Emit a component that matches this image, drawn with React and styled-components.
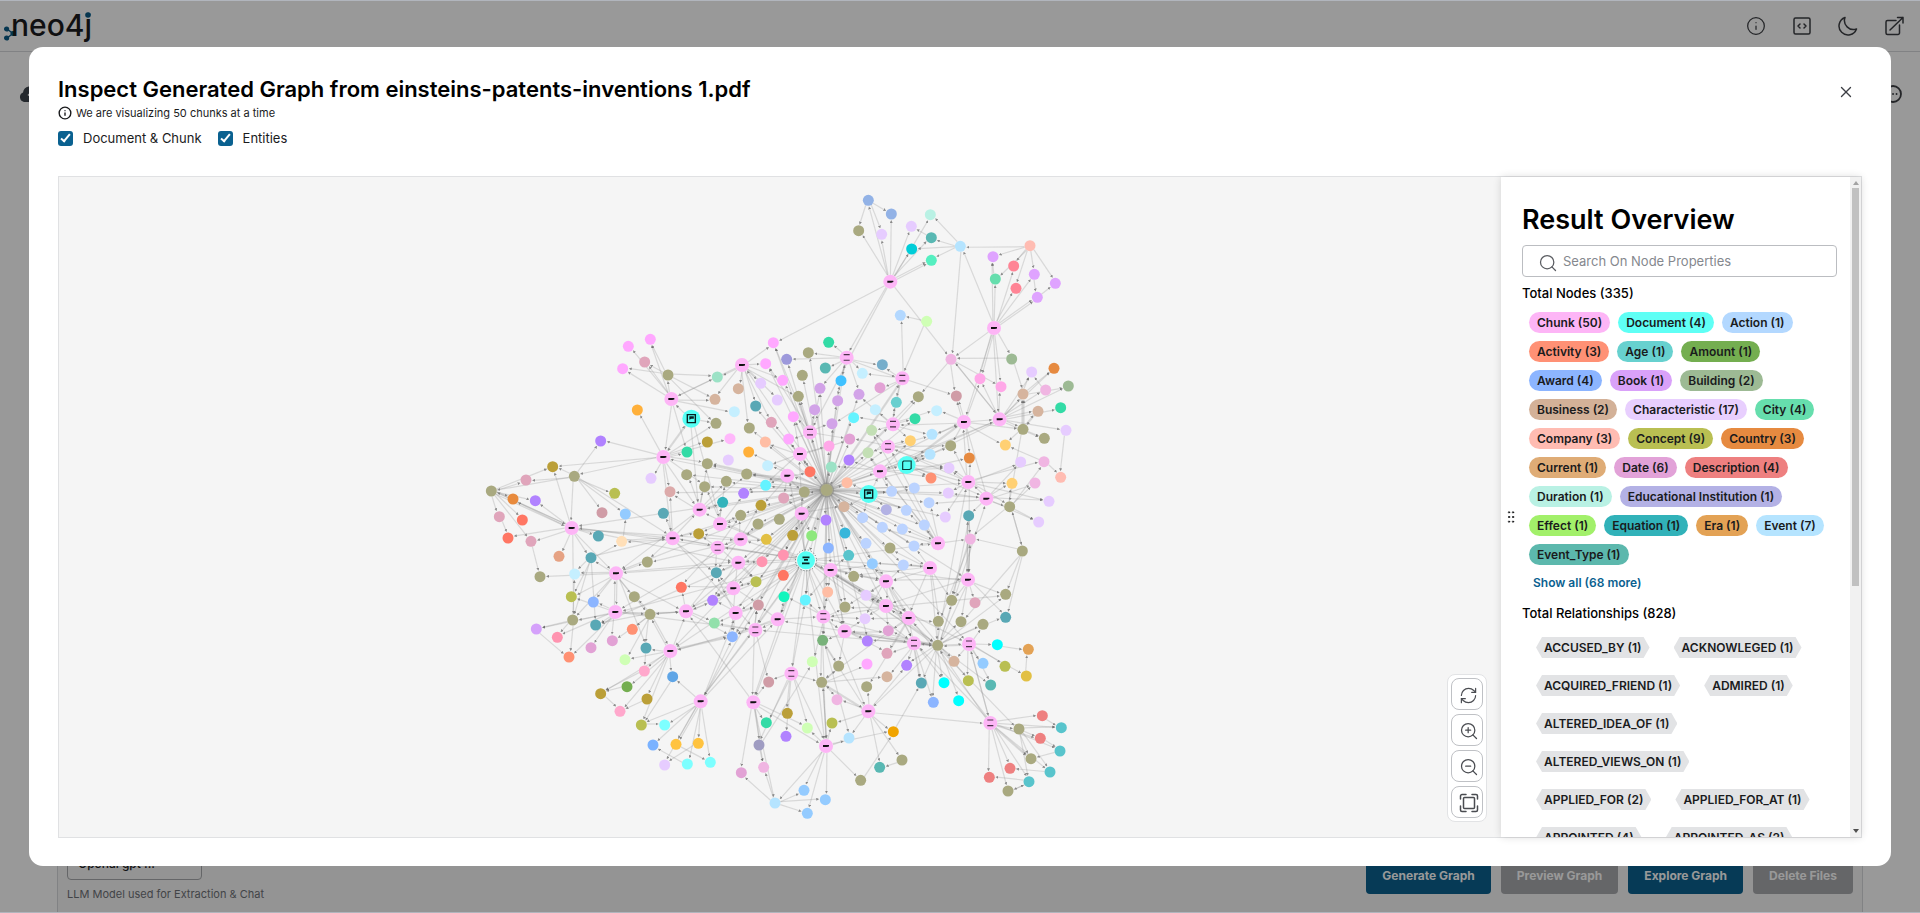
import React from 'react';
import styled, { createGlobalStyle } from 'styled-components';
import { Info, X, Search, ZoomIn, ZoomOut, RefreshCw, GripVertical } from 'lucide-react';

const GlobalStyle = createGlobalStyle`
  *, *::before, *::after { box-sizing: border-box; }
  body {
    margin: 0;
    background: #ffffff;
    color: #1a1b1d;
    font-family: Inter, "Liberation Sans", sans-serif;
    font-size: 12px;
    line-height: 20px;
  }
  button, input, select { font: inherit; color: inherit; }
  h1, h2, h3, p, ul { margin: 0; padding: 0; }
  ul { list-style: none; }
`;

/* ---------- page behind the dialog ---------- */

const Page = styled.div`
  height: 100vh;
  display: flex;
  flex-direction: column;
  overflow: hidden;
`;

const Header = styled.header`
  flex: 0 0 52px;
  display: flex;
  align-items: center;
  justify-content: space-between;
  padding: 0 14px 0 4px;
  border-bottom: 1px solid #d8d9dc;
`;

const HeaderActions = styled.div`
  display: flex;
  align-items: center;
  gap: 22px;
`;

const GhostButton = styled.button`
  display: grid;
  place-items: center;
  width: 24px;
  height: 24px;
  padding: 0;
  border: 0;
  background: none;
  color: #3d3f44;
`;

const Main = styled.main`
  flex: 1;
  display: flex;
`;

const Gutter = styled.aside`
  flex: 0 0 57px;
  display: flex;
  flex-direction: column;
  align-items: ${(p) => (p.$side === 'right' ? 'flex-start' : 'flex-end')};
  padding: ${(p) => (p.$side === 'right' ? '30px 0 0 18px' : '30px 14px 0 0')};
`;

const Content = styled.section`
  flex: 1;
  display: flex;
  align-items: flex-end;
  justify-content: space-between;
  padding: 0 9px;
  background: #f7f7f7;
  border: solid #d8d9dc;
  border-width: 0 1px;
`;

const ModelField = styled.label`
  display: flex;
  flex-direction: column;
  gap: 4px;
  padding-bottom: 9px;
  color: #6f7277;
  font-size: 11px;
`;

const ModelSelect = styled.select`
  appearance: none;
  width: 135px;
  height: 36px;
  padding: 4px 10px 0;
  border: 1px solid #a8aaad;
  border-radius: 4px;
  background: #f7f7f7;
  color: #1a1b1d;
  font-size: 12px;
  font-weight: 500;
`;

const FooterActions = styled.div`
  display: flex;
  gap: 10px;
  padding-bottom: 19px;
`;

const FooterButton = styled.button`
  height: 36px;
  padding: 0 16px;
  border: 0;
  border-radius: 4px;
  background: ${(p) => (p.disabled ? '#a8aaad' : '#0a6190')};
  color: #ffffff;
  font-weight: 700;
`;

/* ---------- dialog ---------- */

const Overlay = styled.div`
  position: fixed;
  inset: 0;
  display: flex;
  padding: 46px 29px;
  border: solid #b1b5bd;
  border-width: 1px 0;
  background: rgba(0, 0, 0, 0.4);
`;

const Dialog = styled.section`
  flex: 1;
  min-width: 0;
  display: flex;
  flex-direction: column;
  padding: 26px 29px 28px;
  border-radius: 14px;
  background: #ffffff;
`;

const DialogHead = styled.header`
  display: flex;
  align-items: flex-start;
  justify-content: space-between;
  padding-right: 4px;
`;

const CloseButton = styled(GhostButton)`
  height: 38px;
`;

const DialogTitle = styled.h2`
  font-size: 22px;
  line-height: 32px;
  font-weight: 600;
  color: #000000;
`;

const Note = styled.p`
  display: flex;
  align-items: center;
  gap: 4px;
  font-size: 11px;
  line-height: 16px;
`;

const Filters = styled.div`
  display: flex;
  gap: 16px;
  margin-top: 7px;
  font-size: 13px;
`;

const FilterLabel = styled.label`
  display: flex;
  align-items: center;
  gap: 10px;
`;

const Tick = styled.input`
  appearance: none;
  position: relative;
  width: 15px;
  height: 15px;
  margin: 0;
  border-radius: 3px;
  background: #0a6190;

  &:checked::after {
    content: "";
    position: absolute;
    left: 5px;
    top: 1px;
    width: 5px;
    height: 10px;
    border: solid #ffffff;
    border-width: 0 2px 2px 0;
    transform: rotate(40deg);
  }
`;

const Viewer = styled.div`
  flex: 1;
  min-height: 0;
  display: flex;
  margin-top: 28px;
  border: 1px solid #e0e1e3;
`;

const Canvas = styled.div`
  position: relative;
  flex: 1;
  min-width: 0;
  background: #f5f5f5;

  > svg { display: block; width: 100%; height: 100%; }
`;

const ViewControls = styled.div`
  position: absolute;
  right: 14px;
  bottom: 15px;
  display: flex;
  flex-direction: column;
  gap: 4px;
  padding: 3px;
  border: 1px solid #e2e3e5;
  border-radius: 8px;
  background: #ffffff;
`;

const ViewButton = styled.button`
  display: grid;
  place-items: center;
  width: 32px;
  height: 32px;
  padding: 2px 0 0 3px;
  border: 1px solid #bfc1c5;
  border-radius: 8px;
  background: #ffffff;
  color: #4a4c51;
`;

const Side = styled.aside`
  position: relative;
  flex: 0 0 360px;
  display: flex;
  background: #ffffff;
  box-shadow: 0 0 8px rgba(0, 0, 0, 0.14);
`;

const SideBody = styled.div`
  flex: 1;
  min-width: 0;
  padding: 23px 13px 0 21px;
  overflow: hidden;
`;

const Grip = styled.span`
  position: absolute;
  left: 2px;
  top: 50%;
  display: flex;
  padding-top: 2px;
  color: #1a1b1d;
`;

const SideTitle = styled.h1`
  font-size: 27px;
  line-height: 40px;
  font-weight: 600;
  color: #000000;
`;

const SearchBox = styled.label`
  display: flex;
  align-items: center;
  gap: 5px;
  height: 32px;
  margin: 5px 0 6px;
  padding: 0 8px 0 15px;
  border: 1px solid #bbbdc1;
  border-radius: 4px;
  color: #5a5c61;

  svg { margin-top: 4px; }

  input {
    flex: 1;
    min-width: 0;
    padding: 0;
    border: 0;
    outline: 0;
    background: none;
    font-size: 13px;
  }
  input::placeholder { color: #85888e; opacity: 1; }
`;

const SubTitle = styled.h3`
  font-size: 13px;
  line-height: 20px;
  font-weight: 500;
  color: #000000;
`;

const NodeList = styled.ul`
  display: flex;
  flex-wrap: wrap;
  gap: 8px;
  padding: 9px 8px 0 7px;
`;

const NodeChip = styled.li`
  padding: 0 8px;
  border-radius: 11px;
  background: ${(p) => p.$color};
  font-weight: 600;
  line-height: 21px;
`;

const ShowAll = styled.a`
  display: block;
  margin: 8px 11px 10px;
  color: #0a6190;
  font-weight: 600;
  text-decoration: none;
`;

const RelationList = styled.ul`
  display: flex;
  flex-wrap: wrap;
  gap: 17px 24px;
  padding: 14px 16px 0 14px;
`;

const RelationChip = styled.li`
  padding: 0 8px;
  background: #e2e3e5;
  clip-path: polygon(6px 0, calc(100% - 6px) 0, 100% 50%, calc(100% - 6px) 100%, 6px 100%, 0 50%);
  font-weight: 600;
  line-height: 21px;
`;

const ScrollTrack = styled.div`
  flex: 0 0 11px;
  display: flex;
  flex-direction: column;
  align-items: center;
  justify-content: space-between;
  padding: 4px 0;
  background: #f1f1f1;
`;

const ScrollThumb = styled.div`
  flex: 0 0 61%;
  width: 7px;
  margin: 3px 0 auto;
  background: #c1c1c1;
`;

const ScrollArrow = styled.span`
  border: 3px solid transparent;
  border-${(p) => (p.$down ? 'top' : 'bottom')}: 4px solid ${(p) => (p.$down ? '#505050' : '#a3a3a3')};
  border-${(p) => (p.$down ? 'bottom' : 'top')}: 0;
`;

/* ---------- data ---------- */

const NODE_LABELS = [
  ['Chunk (50)', '#fdb5f6'], ['Document (4)', '#5ffff5'], ['Action (1)', '#b3d8ff'],
  ['Activity (3)', '#ff9175'], ['Age (1)', '#67d1cf'], ['Amount (1)', '#74ae50'],
  ['Award (4)', '#8cb5ff'], ['Book (1)', '#d9a1f9'], ['Building (2)', '#9dba94'],
  ['Business (2)', '#d3b198'], ['Characteristic (17)', '#e8cffe'], ['City (4)', '#66dead'],
  ['Company (3)', '#ffbcb2'], ['Concept (9)', '#b9bf52'], ['Country (3)', '#e68a40'],
  ['Current (1)', '#dfac76'], ['Date (6)', '#e2a2d8'], ['Description (4)', '#ee8080'],
  ['Duration (1)', '#b9f1e4'], ['Educational Institution (1)', '#b3b1e5'],
  ['Effect (1)', '#a2f06a'], ['Equation (1)', '#31b2b9'], ['Era (1)', '#e3a255'], ['Event (7)', '#b5e4ff'],
  ['Event_Type (1)', '#5cb8ad'],
];

const RELATIONS = [
  'ACCUSED_BY (1)', 'ACKNOWLEGED (1)', 'ACQUIRED_FRIEND (1)', 'ADMIRED (1)', 'ALTERED_IDEA_OF (1)',
  'ALTERED_VIEWS_ON (1)', 'APPLIED_FOR (2)', 'APPLIED_FOR_AT (1)', 'APPOINTED (4)', 'APPOINTED_AS (2)',
];

const COLORS = {
  chunk: '#fdb5f6', lines: '#fdb5f6', doc: '#55fff4', page: '#55fff4', stack: '#55fff4', hub: '#a9a980',
  pink: '#ffa8ff', softpink: '#ffb8fb', rose: '#e0a5bb', olive: '#a9a980', amber: '#ffb03a', violet: '#b182ff',
  gold: '#bb9f38', dorange: '#e88a3c', lime: '#b9bf52', dusty: '#d09ca6', blush: '#dcaaaa', blue: '#94cbff',
  tomato: '#ff7663', teal: '#59a8b5', cream: '#ffdfb8', clay: '#e6a283', lav: '#e6ccff', mint: '#9ce2c6',
  sand: '#d6b49e', sky: '#b5e4ff', ice: '#c5efff', peach: '#ffbda4', emerald: '#33dba6', cyan: '#64f3ff',
  equation: '#33b3bb', mustard: '#e2c044', award: '#8cb5ff', book: '#d5a1fb', flush: '#ff94b0', orchid: '#e2a2d5',
  coral: '#ff9173', pale: '#cfffb5', candy: '#ffa8cc', azure: '#5fa5e6', green: '#74ae50', aqua: '#7dffff',
  blue2: '#7ab2ff', yellow: '#ffc340', green2: '#92e0ab', slate: '#9f9cc2', lorchid: '#f0b5e2', peri: '#9d99db',
  tealg: '#59b8b3', bright: '#3fc1ff', steel: '#76aecb', lilac: '#d2a3e8', turq: '#69cfcf', sage: '#c3dfb5',
  yellow2: '#ffd073', fog: '#bbd3ff', inst: '#b3b2e4', lgreen: '#8ee87d', azure2: '#37b6da', turq2: '#58c4cc',
  hot: '#ffa8e8', building: '#9dba94', country: '#e68a40', salmon: '#ffbcb2', spring: '#12f5bd', green3: '#78b27a',
  cyan0: '#00ffff', era: '#e3a255', ochre: '#f0a400', red: '#ee8080', peri2: '#92b2e6', duration: '#b9f1e4',
  dcyan: '#00cdd8', seag: '#55efc0', action: '#b3d8ff', purple: '#dfa3ff', red2: '#ff8495', city: '#66dead',
};

// Each region keeps its nodes on a grid three times finer than the canvas.
const REGIONS = {
  A: { x: 421, y: 143, nodes: '445 79 pink,511 58 pink,428 146 pink,494 126 rose,564 165 olive,574 237 chunk,472 270 amber,634 296 doc,362 363 violet,550 411 chunk,218 440 gold,283 469 olive,138 480 rose,34 513 olive,99 537 dorange,166 542 violet,404 520 lime,366 578 dusty,436 582 blue,58 590 rose,127 600 tomato,84 654 tomato,153 664 rose,275 624 chunk,355 648 teal,425 664 cream,237 709 clay,333 713 teal,513 475 lav,570 515 blush,550 580 teal,578 655 chunk,712 171 mint,786 135 chunk,857 131 pink,880 68 pink,775 206 sand,842 190 lav,705 238 sand,763 275 ice,827 258 teal,708 310 olive,808 324 olive,874 307 rose,682 366 gold,750 356 softpink,856 366 peach,621 396 emerald,806 396 amber,745 420 lav,682 431 olive,863 437 ice,620 464 olive,800 462 olive,739 484 olive,674 500 olive,857 496 cyan,791 520 violet,728 547 equation,843 556 gold,659 569 chunk,782 586 olive,720 612 chunk,834 612 olive,656 641 gold,782 658 chunk,859 658 mustard,713 683 lines,892 240 lav,898 598 olive' },
  B: { x: 421, y: 383, nodes: '180 50 olive,284 42 ice,408 40 chunk,274 110 lime,340 126 award,463 110 olive,406 156 chunk,510 163 olive,278 180 olive,347 195 teal,169 207 book,232 232 flush,333 263 orchid,397 242 orchid,457 208 coral,267 291 coral,498 264 teal,435 299 pale,571 273 chunk,493 333 candy,578 350 azure,441 380 green,362 401 gold,501 417 gold,420 454 candy,484 495 lime,554 495 aqua,519 555 blue2,588 553 yellow,655 550 yellow,554 615 lav,622 612 aqua,691 607 aqua,662 424 chunk,820 427 chunk,618 154 chunk,604 82 tomato,709 38 teal,698 121 violet,703 189 green2,757 230 award,767 159 chunk,760 85 chunk,775 8 chunk,828 65 lime,835 135 dusty,826 210 lines,893 178 chunk,866 366 dusty,859 488 emerald,837 555 slate,851 622 lorchid,784 638 orchid,885 729 sky,846 5 flush,502 6 olive' },
  C: { x: 721, y: 143, nodes: '20 118 peri,85 98 olive,146 67 emerald,200 113 lines,136 144 tealg,67 166 olive,8 181 pink,183 182 bright,247 160 ice,307 134 steel,367 175 lines,120 205 lilac,55 229 olive,173 242 lilac,237 223 lilac,300 203 orchid,349 247 turq,415 230 olive,104 269 lilac,221 293 cyan,286 269 ice,40 290 pink,156 311 lilac,275 331 sage,339 313 lines,405 296 emerald,470 272 ice,90 337 lines,209 357 orchid,26 357 pink,147 378 hot,324 380 lines,391 362 yellow2,456 343 sky,512 377 olive,60 402 chunk,264 398 sage,450 403 sky,207 420 violet,154 441 mint,90 455 tomato,22 467 chunk,380 435 page,300 454 chunk,507 444 lav,453 474 coral,201 488 peach,140 510 hub,73 516 olive,266 522 doc,335 514 fog,403 504 fog,505 519 lav,11 534 rose,192 560 sand,447 548 fog,319 569 inst,379 571 fog,65 581 chunk,138 600 violet,248 593 fog,496 591 lav,433 615 fog,307 622 fog,367 627 fog,38 646 gold,95 647 lgreen,195 639 azure2,258 670 fog,474 670 chunk,402 678 fog,330 684 olive,145 684 award,206 706 turq2,10 705 flush,513 118 lorchid,642 24 chunk,600 176 hot,695 117 building,755 156 lav,822 145 country,663 200 hot,729 222 sand,797 210 lorchid,865 198 building,529 228 dusty,774 274 sand,842 263 emerald,552 306 chunk,659 298 chunk,729 328 olive,858 331 lav,793 355 olive,676 375 yellow2,568 414 country,722 426 lav,792 425 lorchid,565 486 chunk,842 472 salmon,696 490 yellow2,765 489 lorchid,619 536 chunk,689 560 olive,807 544 lav,566 587 teal,776 606 lav,571 657 lorchid,727 693 olive' },
  D: { x: 721, y: 383, nodes: '78 1 stack,152 30 chunk,10 46 tomato,221 49 olive,277 11 blue,370 15 fog,450 24 chunk,318 64 chunk,564 59 chunk,143 96 peach,76 120 cyan,12 110 spring,258 106 lav,195 141 olive,318 138 chunk,130 170 lines,255 176 lav,386 174 chunk,475 184 olive,515 121 olive,543 185 olive,585 128 rose,609 193 olive,677 103 olive,677 172 teal,194 214 chunk,325 212 orchid,262 243 violet,128 241 green3,402 250 lines,473 256 olive,567 252 lines,652 254 cyan0,745 268 era,321 280 rose,97 305 pale,176 318 olive,261 312 pink,380 316 violet,522 304 sand,609 310 blue,675 319 lime,739 348 mustard,34 341 lines,125 367 olive,321 350 sand,260 380 olive,424 369 teal,492 368 cyan0,565 362 lime,632 375 tealg,460 427 award,536 422 cyan0,171 419 lorchid,265 454 chunk,22 460 gold,156 489 lime,82 504 pale,18 529 violet,207 534 sky,340 515 ochre,138 558 chunk,366 600 olive,299 622 tealg,242 661 olive,72 691 blue,136 719 blue,82 760 blue,631 489 lines,717 507 olive,787 467 red,844 503 turq2,781 535 red,840 573 turq2,753 596 olive,690 625 red,810 636 turq2,628 652 red,747 665 turq2,684 693 olive' },
  E: { x: 761, y: 3, nodes: '145 61 peri2,214 102 peri2,116 152 olive,185 163 lav,274 139 lav,331 104 duration,334 173 tealg,275 207 dcyan,334 241 seag,421 199 sky,211 305 chunk,241 406 action,320 424 pale,630 197 salmon,519 230 purple,581 258 red2,526 297 city,643 283 purple,588 325 red2,706 310 purple,652 352 purple' },
};

// source: targets
const LINKS = `
E10: E0 E1 E2 E3 E4 E5 E6 E7 E8 E8 C75 C3 A35 C27
E9: E5 E6 E7 E8 C75
E0: E1 E2 E3
E12: E11 C10
E13: E9 E14 E15 E16 E17 E18 E19
E20: E19
E17: E20
E16: E14
E6: E4
C10: E11 C9 C8 C16 C15 C85 C24 C22 C47
C76: E9 E14 E16 E15 E18 E17 E20 E20 C75 C77 C77 C81 C89 C78 C88
C78: C75 C82
C75: C17 C85 C89 C81
A5: A0 A1 A2 A3 A4 A32 A38 A9 A47 A39
A4: A1 A3 A2 A32 A38 A41
A33: A32 A34 A35 A36 A37 A38 A40 A5 C12 C6 A43 A42 A68
A9: A6 A8 A7 A10 A11 A44 A41 A47 A50 A29 A31 A28 A45 A60 A55
A11: A8 A10 A12 A13 A16 A17 A18 A23 A31
A13: A10 A12 A14 A15 A19 A20 A22 A23 A23
A23: A10 A13 A14 A15 A21 A22 A24 A27 A26 A31 B2 B8 B43 A65
A19: A21
A22: B0
A27: B1 B3 B8 A25 A31 B9
A25: A18 A31
A31: A29 A30 A25 A60 B37 A64 B46 B55 A67
A60: A50 A52 A55 A54 A58 A29 B2 A53
A62: A58 A61 A55 A54 A64 A57
A65: A61 A63 A66 A59 A64 B37 B55
A67: A64 B37 B44 A61 B36
B2: A27 B0 B1 B3 B4 B5 B6 B8 B35 B43 B55 B7 B16
B6: B3 B4 B8 B10 B11 B9 B12 B13 B15 B7 B35 B2 B46
B7: B5 B13 B14 B16 B17 B35 B9 B18
B8: B10 B11 B15 B1
B10: B15
B18: B16 B17 B19 B21 B22 B23 B24 B25 B20 B40 B40 B35 B7
B16: B19
B19: B22
B22: B24
B23: B24
B21: B22
B20: B25
B33: B20 B25 B26 B27 B28 B28 B29 B30 B31 B32 B41 B46 B47 B40
B25: B26
B28: B32
B29: B30
B31: B27
B35: B36 B37 B39 B40 B38 B42 B7
B41: B38 B39 B40 B45 B37 B45
B42: B36 B37 B44 B38 B45
B43: B37 B38 B44 B54 B40 B9
B46: B39 B40 B45 B48 B34 B45
B47: B45 B40 B18 D15 D11 B46
B34: B35 B49 B50 B51 B52 B48 B53 D61 D57
B50: B51 D35
B53: B52 B51 D65 D66 D67
D43: B48 B49 D44 D55 D57 D58 B50 D61 D10
D0: D1 D10 D11 D15 D25 D43 D7 D14 B47 B46 B41 B42 B43 C58 A65 A62 D17 D29 D61 B35 B18
D0: B33 B6 B2 A67 A60 A31 D8 D6 D31 D54 D30 C69 C41 C35 B34 A23
D1: D3 D9 D13 D10 C73 D4 D7 D12 D14 D25 D17
D7: D3 D4 D12 D16 D14 D13 D5 D17 D29
D6: D5 C71 C70 D3 D18 D30 D17 D7 D19 D4
D8: D19 D21 D23 D24 D20 D7 C104 C106 D14 D30
D14: D12 D16 D13 D26 D23 D15
D15: D9 D13 D28 D16 D25 D35 D10 D11
D17: D12 D16 D18 D26 D34 D30 D46 D47 D44
D25: D28 D16 D26 D27 D29 D30 D34 D36
D29: D27 D30 D30 D30 D34 D38 D47 D48 D51 D26 D45
D30: D18 D19 D20 D22 D23 D24 D31 D38 D39 D47 D48 D49 D50 D51 D52 D29 D69
D30: B47 B46 D7 D1 D14 D25 D15 D54 C101 C97
D31: D32 D40 D41 D42 D49 D50 D39 D22 D30 D68
D32: D33
D42: D33
D28: D36 D44 D59 D61
D44: D36 D53 D54 D37 D61 D45
D54: D53 D56 D59 D60 D63 D62 D46 D44 D38 D68 D28
D61: D56 D59 D60 D64 D65 D66 D67 D44 B53 D57
D64: D60
D62: D63
D60: D47
D68: D69 D70 D71 D72 D73 D74 D74 D75 D76 D77 D78 D79 D29 D30 D31 D17
D69: D71 D72 D74 D76 D78
D70: D71
D72: D73
D76: D75
D78: D77 D79
D73: D74
D79: D78
C69: C62 C64 C70 C63 C57 C55 C36 C43 C31 C23 C106
C97: C94 C96 C99 C95 C102 C103 C44 C44 C52 C34 C88 C31 C61 D8
C101: C95 C102 C103 C105 C100 C99 C104 C97 C55 C52 C85
C88: C85 C89 C26 C24 C34 C77 C94 C90 C93 C33 C42
C89: C82 C83 C84 C87 C86 C80 C79 C90 C91 C92 C81 C77 C75 C42 C43
C90: C82 C82 C82 C93 C86 C92 C102
C82: C79 C80 C84
C83: C79
C86: C90
C91: C98
C96: C98 C93
C102: C96 C99 C105 C106 C107 C100
C107: C106 D24 D23 C102 D20
C104: C106 D8 D19
C106: D8 D19 D18
C3: C1 C2 C4 C7 C9 C8 C11 C13 C14 C0 C10
C24: C16 C20 C19 C23 C25 C17 C26 C32 C33 C14
C31: C23 C28 C32 C36 C33 C37 C34 C44
C27: C12 C18 C21 C22 C28 C11 C29 A35 A34
C35: C29 C30 C28 C40 A51 A56 A46 C21
C41: C40 A53 A56 A57 A59 C53 C48
C43: C36 C38 C39 C45 C44 C50 C37 C32
C58: C53 C65 C66 C59 C54 A70 C74 A66 C48
C49: C50 C51 C56 C60 C46 C54 C57 C43
C42: C88 C45 C37 C101 C44 C97
A7: A5 A9 A60 A62 A41
C47: A33 A9 A50 A50 A50 A52 A53 A54 A55 A57 A59 A60 A61 A62 A63 A65 A67 A42 A43 A46 A48 A51 A56 A35 A34 A40 A31 A23 A29
C47: C0 C1 C3 C5 C6 C7 C11 C12 C13 C14 C18 C19 C21 C22 C24 C27 C28 C29 C30 C31 C35 C36 C38 C39 C40 C41 C42 C43 C46 C48 C49
C47: C50 C51 C52 C53 C54 C55 C56 C57 C58 C59 C60 C61 C62 C63 C64 C65 C66 C67 C68 C69 C70 C71 C72 C73 C74 C88 C89 C97 C101 C94 C34 C17 C25 C10
C47: D0 D1 D6 D7 D8 D14 D15 D17 D25 D29 D31 D3 D4 D5 D9 D13 D28 D10 D27 B33 B34 B35 B18 B41 B42 B43 B46 B47 B6 B2 B44 B54 B45 B40 B38
`;

const SIZES = { chunk: 7, lines: 7, doc: 9, page: 9, stack: 10, hub: 6 };
const radius = (kind) => SIZES[kind] || 5.5;

const nodes = {};
Object.entries(REGIONS).forEach(([name, region]) => {
  region.nodes.split(',').forEach((entry, i) => {
    const [x, y, kind] = entry.split(' ');
    nodes[name + i] = { id: name + i, x: region.x + x / 3, y: region.y + y / 3, kind };
  });
});

const links = LINKS.trim().split('\n').flatMap((line) => {
  const [from, targets] = line.split(': ');
  return targets.split(' ').map((to) => [nodes[from], nodes[to]]);
}).filter(([a, b]) => a && b && a !== b);

function GraphLink({ a, b, bend }) {
  const dx = b.x - a.x;
  const dy = b.y - a.y;
  const len = Math.hypot(dx, dy) || 1;
  const ux = dx / len;
  const uy = dy / len;
  const sx = a.x + ux * radius(a.kind) - uy * bend;
  const sy = a.y + uy * radius(a.kind) + ux * bend;
  const ex = b.x - ux * (radius(b.kind) + 2) - uy * bend;
  const ey = b.y - uy * (radius(b.kind) + 2) + ux * bend;
  return <line x1={sx} y1={sy} x2={ex} y2={ey} markerEnd="url(#arrow)" />;
}

function GraphNode({ node }) {
  const { x, y, kind } = node;
  return (
    <g transform={`translate(${x} ${y})`}>
      {kind === 'hub' && <circle r="7.5" fill="#8f8f86" opacity="0.7" />}
      {kind === 'stack' && <circle r="10.5" fill="none" stroke="#5b6b6a" strokeDasharray="1 2" />}
      <circle r={kind === 'stack' ? 9 : radius(kind)} fill={COLORS[kind]} />
      {kind === 'chunk' && <path d="M-3 -1H3V0.4L1 1H-3Z" fill="#111" />}
      {kind === 'lines' && <path d="M-3 -3H3M-3 2.6H3" stroke="#4a3348" strokeWidth="1.2" />}
      {kind === 'page' && <path d="M-4 4.500V-3L-3 -4H4.500V3.500L3 4.500Z" fill="none" stroke="#0b3b3a" strokeWidth="1.2" />}
      {kind === 'doc' && (
        <>
          <path d="M-4 4V-4H4V4Z" fill="none" stroke="#06201f" strokeWidth="1.4" />
          <path d="M-2 -2.500H2.500V0H0L-2 1Z" fill="#06201f" />
        </>
      )}
      {kind === 'stack' && <path d="M-3.500 -3H3.500M-2 -0.500H2M-4 3H3.500" stroke="#06201f" strokeWidth="1.8" />}
    </g>
  );
}

function Graph() {
  return (
    <svg viewBox="0 0 1442 660" preserveAspectRatio="xMidYMid meet" role="img" aria-label="Generated graph">
      <defs>
        <marker id="arrow" viewBox="0 0 4 4" refX="2" refY="2" markerWidth="3" markerHeight="3" markerUnits="userSpaceOnUse" orient="auto">
          <path d="M0 0L4 2L0 4Z" fill="#666" fillOpacity="0.7" stroke="none" />
        </marker>
      </defs>
      <g stroke="#8c8c8c" strokeOpacity="0.27" strokeWidth="1.2">
        {links.map(([a, b], i) => <GraphLink key={i} a={a} b={b} bend={(i % 3) - 1} />)}
      </g>
      {Object.values(nodes).map((n) => <GraphNode key={n.id} node={n} />)}
    </svg>
  );
}

/* ---------- icons ---------- */

const Stroke = ({ size = 20, width = 1.5, children }) => (
  <svg width={size} height={size} viewBox="0 0 20 20" fill="none" stroke="currentColor" strokeWidth={width} strokeLinecap="round" strokeLinejoin="round" aria-hidden="true">
    {children}
  </svg>
);

function Logo() {
  return (
    <svg width="96" height="40" viewBox="0 0 96 40" role="img" aria-label="neo4j">
      <g fill="#0a5b86" stroke="#0a5b86" strokeWidth="1.4">
        <path d="M3 23L9 27.500L3 32" fill="none" />
        <circle cx="2.600" cy="23" r="1.900" />
        <circle cx="9" cy="27.500" r="1.900" />
        <circle cx="2.600" cy="32" r="1.900" />
      </g>
      <text x="7" y="30" fontFamily="Inter, sans-serif" fontSize="30" fontWeight="500" fill="#1b1c1e">neo4j</text>
      <circle cx="84" cy="9" r="2.800" fill="#0a5b86" />
    </svg>
  );
}

export default function App() {
  return (
    <>
      <GlobalStyle />
      <Page>
        <Header>
          <Logo />
          <HeaderActions>
            <GhostButton aria-label="About"><Info size={20} strokeWidth={1.5} /></GhostButton>
            <GhostButton aria-label="Code">
              <Stroke>
                <rect x="2" y="2" width="16" height="16" rx="1.500" />
                <path d="M8 8L6 10L8 12M12 8L14 10L12 12" />
              </Stroke>
            </GhostButton>
            <GhostButton aria-label="Dark mode">
              <Stroke><path d="M7 1.500A9 9 0 1 0 18.500 13A9 9 0 0 1 7 1.500Z" /></Stroke>
            </GhostButton>
            <GhostButton aria-label="Open in new tab">
              <Stroke>
                <path d="M12 4.500H3.500A1.500 1.500 0 0 0 2 6V17A1.500 1.500 0 0 0 3.500 18.500H14A1.500 1.500 0 0 0 15.500 17V9" />
                <path d="M6 14L19 1.500M13.500 1.500H19V7" />
              </Stroke>
            </GhostButton>
          </HeaderActions>
        </Header>
        <Main>
          <Gutter>
            <GhostButton aria-label="Upload files">
              <svg width="24" height="16" viewBox="0 0 24 16" fill="#3d444b" aria-hidden="true">
                <path d="M5 16A5 5 0 0 1 4 6.500A7 7 0 0 1 17 4A6 6 0 0 1 19 16Z" />
                <path d="M12 13V7M9 9.500L12 6.500L15 9.500" stroke="#fff" strokeWidth="1.500" fill="none" />
              </svg>
            </GhostButton>
          </Gutter>
          <Content>
            <ModelField>
              <ModelSelect defaultValue="gpt">
                <option value="gpt">Openai gpt ...</option>
              </ModelSelect>
              <span>LLM Model used for Extraction &amp; Chat</span>
            </ModelField>
            <FooterActions>
              <FooterButton>Generate Graph</FooterButton>
              <FooterButton disabled>Preview Graph</FooterButton>
              <FooterButton>Explore Graph</FooterButton>
              <FooterButton disabled>Delete Files</FooterButton>
            </FooterActions>
          </Content>
          <Gutter $side="right">
            <GhostButton aria-label="Chat">
              <Stroke width={1.8}>
                <circle cx="10" cy="10" r="8" />
                <path d="M6 10H6.100M10 10H10.100M13.500 10H13.600" />
              </Stroke>
            </GhostButton>
          </Gutter>
        </Main>
      </Page>

      <Overlay>
        <Dialog role="dialog" aria-modal="true" aria-labelledby="dialog-title">
          <DialogHead>
            <div>
              <DialogTitle id="dialog-title">Inspect Generated Graph from einsteins-patents-inventions 1.pdf</DialogTitle>
              <Note><Info size={14} strokeWidth={2.4} />We are visualizing 50 chunks at a time</Note>
            </div>
            <CloseButton aria-label="Close"><X size={18} strokeWidth={1.8} /></CloseButton>
          </DialogHead>
          <Filters>
            <FilterLabel><Tick type="checkbox" defaultChecked />Document &amp; Chunk</FilterLabel>
            <FilterLabel><Tick type="checkbox" defaultChecked />Entities</FilterLabel>
          </Filters>
          <Viewer>
            <Canvas>
              <Graph />
              <ViewControls>
                <ViewButton aria-label="Refresh"><RefreshCw size={19} strokeWidth={1.5} /></ViewButton>
                <ViewButton aria-label="Zoom in"><ZoomIn size={20} strokeWidth={1.5} /></ViewButton>
                <ViewButton aria-label="Zoom out"><ZoomOut size={20} strokeWidth={1.5} /></ViewButton>
                <ViewButton aria-label="Zoom to fit">
                  <Stroke>
                    <rect x="4.500" y="4.500" width="11" height="11" rx="1" />
                    <path d="M1.500 6V3A1.500 1.500 0 0 1 3 1.500H7M13 1.500H17A1.500 1.500 0 0 1 18.500 3V6M18.500 13V17A1.500 1.500 0 0 1 17 18.500H13M7 18.500H3A1.500 1.500 0 0 1 1.500 17V13" />
                  </Stroke>
                </ViewButton>
              </ViewControls>
            </Canvas>
            <Side>
              <Grip><GripVertical size={16} strokeWidth={1.5} /></Grip>
              <SideBody>
                <SideTitle>Result Overview</SideTitle>
                <SearchBox>
                  <Search size={20} strokeWidth={1.5} />
                  <input type="text" placeholder="Search On Node Properties" aria-label="Search On Node Properties" />
                </SearchBox>
                <SubTitle>Total Nodes (335)</SubTitle>
                <NodeList>
                  {NODE_LABELS.map(([label, color]) => <NodeChip key={label} $color={color}>{label}</NodeChip>)}
                </NodeList>
                <ShowAll href="#nodes">Show all (68 more)</ShowAll>
                <SubTitle>Total Relationships (828)</SubTitle>
                <RelationList>
                  {RELATIONS.map((label) => <RelationChip key={label}>{label}</RelationChip>)}
                </RelationList>
              </SideBody>
              <ScrollTrack aria-hidden="true">
                <ScrollArrow />
                <ScrollThumb />
                <ScrollArrow $down />
              </ScrollTrack>
            </Side>
          </Viewer>
        </Dialog>
      </Overlay>
    </>
  );
}
